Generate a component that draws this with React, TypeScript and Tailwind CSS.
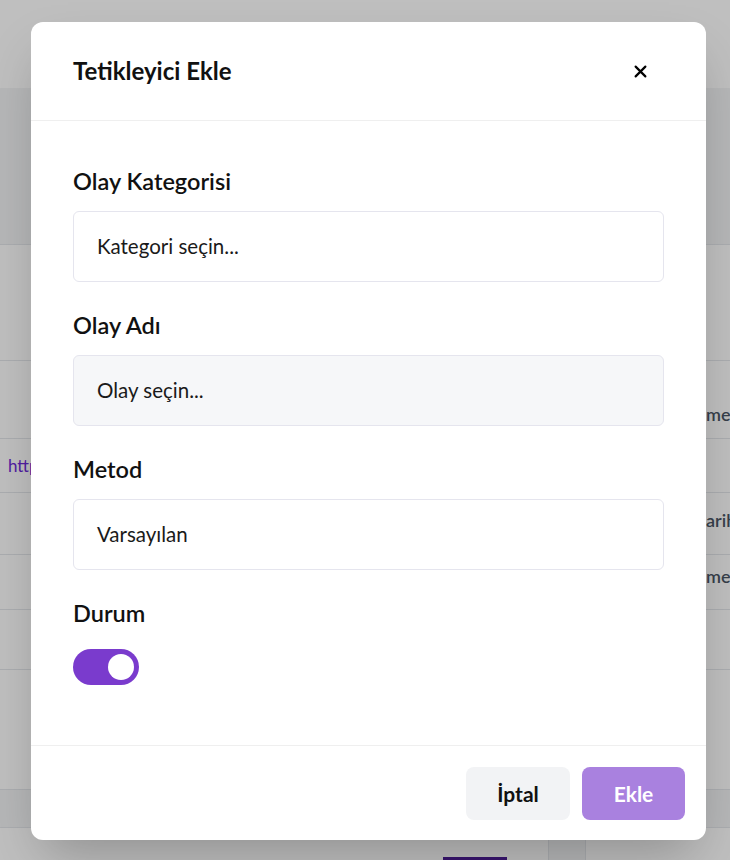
import React from "react";

const font = { fontFamily: '"Lato", "Noto Sans", sans-serif' };

function Field({ label, placeholder, gray }: { label: string; placeholder: string; gray?: boolean }) {
  return (
    <div className="mb-[29px]">
      <div className="h-[30px] flex items-center text-[23.5px] font-semibold text-[#111111] leading-none">{label}</div>
      <div
        className={`mt-[14px] h-[71px] rounded-md border border-[#e5e5ee] flex items-center pl-[23px] text-[20.5px] text-[#1a1a1a] ${
          gray ? "bg-[#f6f7f9]" : "bg-white"
        }`}
      >
        {placeholder}
      </div>
    </div>
  );
}

export default function App() {
  return (
    <div className="relative w-[730px] h-[860px] overflow-hidden bg-white" style={font}>
      {/* background page */}
      <div className="flex flex-col w-full">
        <div className="h-[88px] bg-white" />
        <div className="h-[157px] bg-gray-100 border-b border-gray-200" />
        <div className="h-[116px] border-b border-gray-200" />
        <div className="h-[78px] border-b border-gray-200 flex items-start justify-end">
          <div className="w-[24px] overflow-hidden whitespace-nowrap text-[18px] font-semibold text-gray-600 pt-[40px]">me</div>
        </div>
        <div className="h-[54px] border-b border-gray-200 flex items-center">
          <span className="pl-[8px] text-[17px] text-[#6d28d9]">https://</span>
        </div>
        <div className="h-[62px] border-b border-gray-200 flex items-start justify-end">
          <div className="w-[24px] overflow-hidden whitespace-nowrap text-[18px] font-semibold text-gray-600 pt-[14px]">arih</div>
        </div>
        <div className="h-[55px] border-b border-gray-200 flex items-start justify-end">
          <div className="w-[24px] overflow-hidden whitespace-nowrap text-[18px] font-semibold text-gray-600 pt-[8px]">me</div>
        </div>
        <div className="h-[60px] border-b border-gray-200" />
        <div className="h-[120px] border-b border-gray-200" />
        <div className="h-[38px] bg-gray-100 border-b border-gray-200" />
        <div className="h-[32px] flex">
          <div className="w-[443px]" />
          <div className="w-[64px] flex flex-col justify-end">
            <div className="h-[3px] bg-[#4c1d95]" />
          </div>
          <div className="w-[41px]" />
          <div className="w-[38px] bg-gray-100 border-x border-gray-200" />
        </div>
      </div>

      {/* overlay */}
      <div className="absolute inset-0 bg-black/25">
        <div className="absolute left-[31px] top-[22px] w-[675px] h-[818px] bg-white rounded-xl shadow-2xl flex flex-col">
          <div className="h-[99px] flex items-center justify-between pl-[42px] pr-[59px] border-b border-[#efefef]">
            <div className="text-[24px] font-bold text-[#111111] leading-none">Tetikleyici Ekle</div>
            <svg width="13" height="13" viewBox="0 0 12 12" className="text-black">
              <path d="M1.5 1.5 L10.5 10.5 M10.5 1.5 L1.5 10.5" stroke="currentColor" strokeWidth="2" strokeLinecap="round" />
            </svg>
          </div>
          <div className="flex-1 px-[42px] pt-[46px]">
            <Field label="Olay Kategorisi" placeholder="Kategori seçin..." />
            <Field label="Olay Adı" placeholder="Olay seçin..." gray />
            <Field label="Metod" placeholder="Varsayılan" />
            <div>
              <div className="h-[30px] flex items-center text-[23.5px] font-semibold text-[#111111] leading-none">Durum</div>
              <div className="mt-[20px] w-[66px] h-[36px] rounded-full bg-[#7a3bcd] flex items-center justify-end pr-[5px]">
                <div className="w-[26px] h-[26px] rounded-full bg-white" />
              </div>
            </div>
          </div>
          <div className="border-t border-[#efefef] flex justify-end gap-[12px] pt-[21px] pb-[20px] pr-[21px]">
            <button className="w-[104px] h-[53px] rounded-lg bg-[#f2f3f5] text-[21px] font-bold text-[#111111]">İptal</button>
            <button className="w-[103px] h-[53px] rounded-lg bg-[#a981df] text-[21px] font-bold text-white">Ekle</button>
          </div>
        </div>
      </div>
    </div>
  );
}
